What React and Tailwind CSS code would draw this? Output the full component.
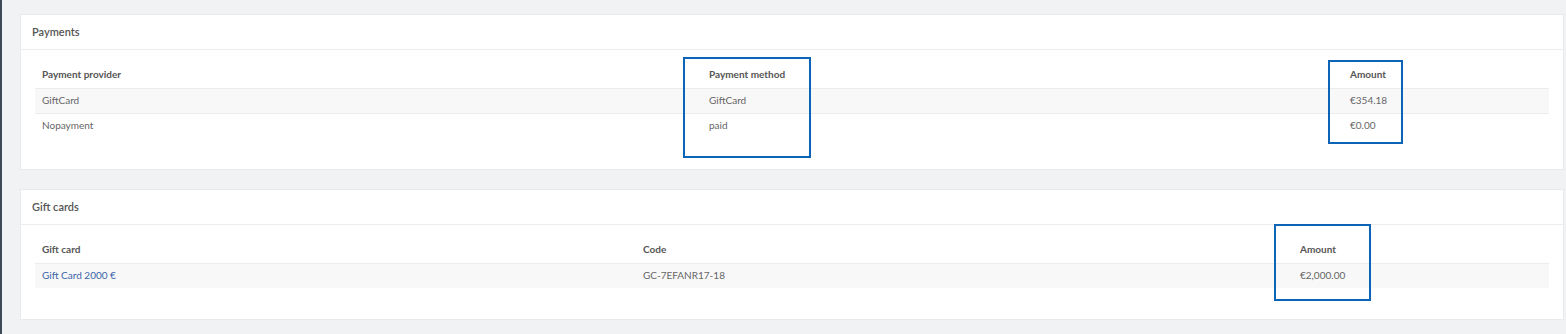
import React from 'react';

const payments = [
  { provider: 'GiftCard', method: 'GiftCard', amount: '€354.18' },
  { provider: 'Nopayment', method: 'paid', amount: '€0.00' },
];

const giftCards = [{ name: 'Gift Card 2000 €', code: 'GC-7EFANR17-18', amount: '€2,000.00' }];

function Card({ title, children }) {
  return (
    <div className="bg-white border border-[#e9eaec]">
      <div className="h-[35px] flex items-center px-[11px] border-b border-[#ececee] text-[11px] font-semibold text-[#555]">
        {title}
      </div>
      <div className="px-[14px] pt-[12px] pb-[31px]">{children}</div>
    </div>
  );
}

function App() {
  return (
    <div
      className="relative w-[1566px] h-[334px] bg-[#f1f2f4] border-l-2 border-[#3d4a58] overflow-hidden"
      style={{ fontFamily: 'Lato, "Open Sans", sans-serif' }}
    >
      <div className="pt-[14px] pl-[18px] pr-[2px] flex flex-col gap-[19px]">
        <Card title="Payments">
          <table className="w-full text-[10px] border-collapse">
            <thead>
              <tr className="text-[#555] font-bold text-left">
                <th className="h-[26px] pl-[7px] w-[674px]">Payment provider</th>
                <th className="h-[26px] w-[641px]">Payment method</th>
                <th className="h-[26px]">Amount</th>
              </tr>
            </thead>
            <tbody className="text-[#666]">
              {payments.map((p, i) => (
                <tr key={i} className={i === 0 ? 'bg-[#f8f8f9] border-t border-b border-[#ececee]' : ''}>
                  <td className="h-[25px] pl-[7px]">{p.provider}</td>
                  <td className="h-[25px]">{p.method}</td>
                  <td className="h-[25px]">{p.amount}</td>
                </tr>
              ))}
            </tbody>
          </table>
        </Card>
        <Card title="Gift cards">
          <table className="w-full text-[10px] border-collapse">
            <thead>
              <tr className="text-[#555] font-bold text-left">
                <th className="h-[26px] pl-[7px] w-[608px]">Gift card</th>
                <th className="h-[26px] w-[657px]">Code</th>
                <th className="h-[26px]">Amount</th>
              </tr>
            </thead>
            <tbody className="text-[#666]">
              {giftCards.map((g, i) => (
                <tr key={i} className="bg-[#f8f8f9] border-t border-[#ececee]">
                  <td className="h-[25px] pl-[7px] text-[#3a64a8]">{g.name}</td>
                  <td className="h-[25px]">{g.code}</td>
                  <td className="h-[25px]">{g.amount}</td>
                </tr>
              ))}
            </tbody>
          </table>
        </Card>
      </div>

      {/* annotation boxes */}
      <div className="absolute left-[681px] top-[57px] w-[128px] h-[101px] border-2 border-[#0b64b6]" />
      <div className="absolute left-[1326px] top-[60px] w-[75px] h-[84px] border-2 border-[#0b64b6]" />
      <div className="absolute left-[1272px] top-[224px] w-[97px] h-[77px] border-2 border-[#0b64b6]" />
    </div>
  );
}

export default App;
